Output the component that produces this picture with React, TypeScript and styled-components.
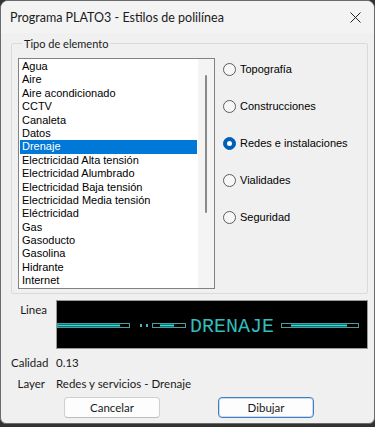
import styled, { createGlobalStyle } from "styled-components";

const GlobalStyle = createGlobalStyle`
  html, body {
    margin: 0;
    padding: 0;
    background: #333333;
  }
  * {
    box-sizing: border-box;
  }
`;

const uiFont = `Lato, "Liberation Sans", sans-serif`;
const classicFont = `"Liberation Sans", Arial, sans-serif`;

const Window = styled.div`
  width: 375px;
  height: 424px;
  background: #f0f0f0;
  border: 1px solid #6b6b6b;
  border-radius: 8px 8px 6px 6px;
  overflow: hidden;
  display: flex;
  flex-direction: column;
  font-family: ${uiFont};
  font-size: 12px;
  color: #1a1a1a;
`;

const TitleBar = styled.div`
  height: 32px;
  flex: none;
  display: flex;
  align-items: center;
  justify-content: space-between;
  padding: 0 12px 0 9px;
  background: #f3f3f3;
  font-size: 12.5px;
  color: #1b1b1b;
`;

const CloseButton = styled.div`
  width: 14px;
  height: 14px;
  display: flex;
  align-items: center;
  justify-content: center;
`;

const Body = styled.div`
  flex: 1;
  display: flex;
  flex-direction: column;
  padding: 3px 6px 0 10px;
`;

const GroupBox = styled.fieldset`
  margin: 0;
  padding: 7px 6px 4px 6px;
  border: 1px solid #dadada;
  border-radius: 2px;
  display: flex;
  gap: 8px;
`;

const Legend = styled.legend`
  margin-left: 4px;
  padding: 0 2px;
  line-height: 15px;
  font-size: 11px;
`;

const ListBox = styled.div`
  width: 197px;
  height: 231px;
  flex: none;
  border: 1px solid #828282;
  background: #ffffff;
  display: flex;
  overflow: hidden;
`;

const Items = styled.div`
  flex: 1;
  padding-top: 1px;
  overflow: hidden;
`;

const Item = styled.div<{ $selected?: boolean }>`
  height: 13.4px;
  line-height: 13.4px;
  margin: 0 1px;
  padding-left: 2px;
  font-family: ${classicFont};
  font-size: 11px;
  white-space: nowrap;
  background: ${(p) => (p.$selected ? "#0078d7" : "transparent")};
  color: ${(p) => (p.$selected ? "#ffffff" : "#000000")};
`;

const ScrollTrack = styled.div`
  width: 16px;
  flex: none;
  background: #f4f4f4;
  display: flex;
  justify-content: center;
  padding-top: 16px;
`;

const ScrollThumb = styled.div`
  width: 2px;
  height: 138px;
  border-radius: 1px;
  background: #8a8a8a;
`;

const RadioColumn = styled.div`
  display: flex;
  flex-direction: column;
  gap: 17px;
  padding-top: 1px;
`;

const RadioRow = styled.label`
  height: 20px;
  display: flex;
  align-items: center;
  gap: 4px;
  font-family: ${classicFont};
  font-size: 11px;
  color: #000000;
`;

const RadioDot = styled.span<{ $checked?: boolean }>`
  width: 13px;
  height: 13px;
  border-radius: 50%;
  flex: none;
  background: ${(p) => (p.$checked ? "#005fb8" : "#f7f7f7")};
  border: 1px solid ${(p) => (p.$checked ? "#005fb8" : "#5c5c5c")};
  display: flex;
  align-items: center;
  justify-content: center;

  &::after {
    content: "";
    display: ${(p) => (p.$checked ? "block" : "none")};
    width: 5px;
    height: 5px;
    border-radius: 50%;
    background: #ffffff;
  }
`;

const FieldRow = styled.div<{ $top: number; $gap: number }>`
  display: flex;
  align-items: flex-start;
  gap: ${(p) => p.$gap}px;
  margin-top: ${(p) => p.$top}px;
`;

const FieldLabel = styled.div<{ $width: number; $pad?: number }>`
  width: ${(p) => p.$width}px;
  flex: none;
  text-align: right;
  line-height: 15px;
  padding-top: ${(p) => p.$pad ?? 0}px;
  font-size: 11.5px;
  white-space: nowrap;
`;

const FieldValue = styled.div`
  line-height: 15px;
  font-size: 11.5px;
`;

const Preview = styled.div`
  width: 312px;
  height: 49px;
  background: #000000;
  border: 1px solid #9a9a9a;
`;

const ButtonRow = styled.div`
  display: flex;
  justify-content: center;
  gap: 58px;
  margin-top: 6px;
  padding-right: 1px;
`;

const Button = styled.button<{ $default?: boolean }>`
  width: 96px;
  height: 21px;
  padding: 0;
  font-family: ${uiFont};
  font-size: 11.5px;
  color: #1a1a1a;
  background: #fdfdfd;
  border: 1px solid ${(p) => (p.$default ? "#3f7fbf" : "#d0d0d0")};
  border-bottom-color: ${(p) => (p.$default ? "#3f7fbf" : "#bcbcbc")};
  box-shadow: ${(p) => (p.$default ? "inset 0 0 0 1px #c9dcef" : "none")};
  border-radius: 4px;
`;

const items = [
  "Agua",
  "Aire",
  "Aire acondicionado",
  "CCTV",
  "Canaleta",
  "Datos",
  "Drenaje",
  "Electricidad Alta tensión",
  "Electricidad Alumbrado",
  "Electricidad Baja tensión",
  "Electricidad Media tensión",
  "Eléctricidad",
  "Gas",
  "Gasoducto",
  "Gasolina",
  "Hidrante",
  "Internet",
];

const categories = [
  "Topografía",
  "Construcciones",
  "Redes e instalaciones",
  "Vialidades",
  "Seguridad",
];

// dashed polyline sample: outlined bar with a bright core
function Segment({ x, w, core }: { x: number; w: number; core: [number, number] }) {
  return (
    <g>
      <rect x={x + 0.5} y={22.5} width={w} height={4} fill="none" stroke="#4f9c9c" strokeWidth={1} />
      <line x1={x + core[0]} y1={24.5} x2={x + core[1]} y2={24.5} stroke="#22e3e3" strokeWidth={2} />
    </g>
  );
}

function LinePreview() {
  return (
    <svg width="310" height="47" viewBox="0 0 310 47">
      <Segment x={0} w={72} core={[1, 63]} />
      <rect x={83} y={23} width={2} height={3} fill="#3fbcbc" />
      <rect x={89} y={23} width={2} height={3} fill="#3fbcbc" />
      <Segment x={95} w={33} core={[8, 22]} />
      <text
        x={133}
        y={31}
        fill="#30bdbd"
        fontFamily='"Liberation Mono", monospace'
        fontSize={21}
        textLength={84}
        lengthAdjust="spacingAndGlyphs"
      >
        DRENAJE
      </text>
      <Segment x={224} w={77} core={[10, 66]} />
    </svg>
  );
}

export default function App() {
  return (
    <>
      <GlobalStyle />
      <Window>
        <TitleBar>
          <span>Programa PLATO3 - Estilos de polilínea</span>
          <CloseButton>
            <svg width="11" height="11" viewBox="0 0 11 11">
              <path d="M0.5 0.5 L10.5 10.5 M10.5 0.5 L0.5 10.5" stroke="#222" strokeWidth="1" />
            </svg>
          </CloseButton>
        </TitleBar>
        <Body>
          <GroupBox>
            <Legend>Tipo de elemento</Legend>
            <ListBox>
              <Items>
                {items.map((it) => (
                  <Item key={it} $selected={it === "Drenaje"}>
                    {it}
                  </Item>
                ))}
              </Items>
              <ScrollTrack>
                <ScrollThumb />
              </ScrollTrack>
            </ListBox>
            <RadioColumn>
              {categories.map((c) => (
                <RadioRow key={c}>
                  <RadioDot $checked={c === "Redes e instalaciones"} />
                  {c}
                </RadioRow>
              ))}
            </RadioColumn>
          </GroupBox>
          <FieldRow $top={6} $gap={9}>
            <FieldLabel $width={36} $pad={2}>
              Linea
            </FieldLabel>
            <Preview>
              <LinePreview />
            </Preview>
          </FieldRow>
          <FieldRow $top={6} $gap={11}>
            <FieldLabel $width={34}>Calidad</FieldLabel>
            <FieldValue>0.13</FieldValue>
          </FieldRow>
          <FieldRow $top={6} $gap={11}>
            <FieldLabel $width={34}>Layer</FieldLabel>
            <FieldValue>Redes y servicios - Drenaje</FieldValue>
          </FieldRow>
          <ButtonRow>
            <Button>Cancelar</Button>
            <Button $default>Dibujar</Button>
          </ButtonRow>
        </Body>
      </Window>
    </>
  );
}
